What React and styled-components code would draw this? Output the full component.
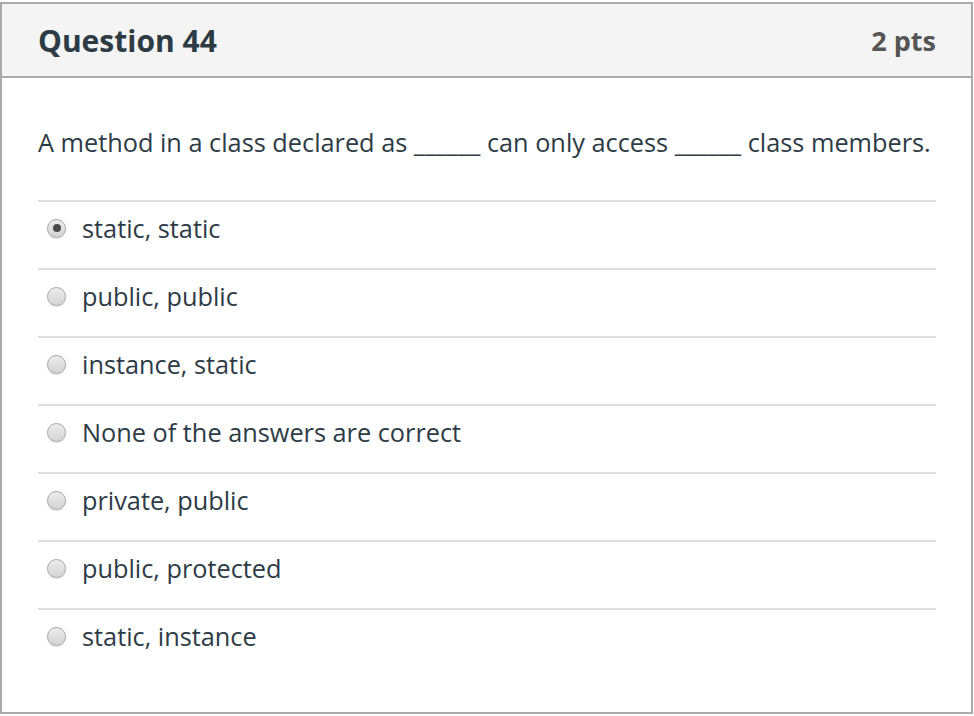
import React, { useState } from "react";
import styled, { createGlobalStyle } from "styled-components";

const GlobalStyle = createGlobalStyle`
  body {
    margin: 0;
    background: #ffffff;
    font-family: "Open Sans", "Liberation Sans", sans-serif;
    color: #2d3b45;
  }
`;

const Card = styled.div`
  box-sizing: border-box;
  width: 973px;
  height: 712px;
  margin-top: 2px;
  border: 2px solid #aaaaaa;
  display: flex;
  flex-direction: column;
`;

const Header = styled.div`
  display: flex;
  justify-content: space-between;
  align-items: center;
  height: 72px;
  padding: 0 35px 0 36px;
  background-color: #f4f4f4;
  border-bottom: 2px solid #aaaaaa;
`;

const Title = styled.h2`
  margin: 0;
  font-size: 30px;
  font-weight: 700;
  color: #2d3b45;
`;

const Points = styled.span`
  font-size: 27px;
  font-weight: 700;
  color: #555555;
`;

const Body = styled.div`
  padding: 47px 35px 0 36px;
`;

const QuestionText = styled.p`
  margin: 0 0 41px;
  font-size: 25.3px;
  line-height: 34px;
`;

const Answers = styled.div`
  display: flex;
  flex-direction: column;
`;

const AnswerRow = styled.label`
  display: flex;
  align-items: center;
  gap: 16px;
  height: 68px;
  padding: 0 0 14px 10px;
  box-sizing: border-box;
  border-top: 2px solid #dddddd;
  font-size: 25.3px;
  cursor: pointer;
`;

const Radio = styled.span`
  position: relative;
  width: 19px;
  height: 19px;
  margin-left: -1px;
  border-radius: 50%;
  box-sizing: border-box;
  border: 1px solid #a8a8a8;
  background: linear-gradient(#ececec, #d4d4d4);
  box-shadow: 0 1px 1px rgba(0, 0, 0, 0.15);
  flex-shrink: 0;

  &::after {
    content: "";
    display: ${(p) => (p.checked ? "block" : "none")};
    position: absolute;
    left: 4.5px;
    top: 4.5px;
    width: 8px;
    height: 8px;
    border-radius: 50%;
    background: #4a4a4a;
  }
`;

const answers = [
  "static, static",
  "public, public",
  "instance, static",
  "None of the answers are correct",
  "private, public",
  "public, protected",
  "static, instance",
];

export default function App() {
  const [selected, setSelected] = useState(0);
  return (
    <>
      <GlobalStyle />
      <Card>
        <Header>
          <Title>Question 44</Title>
          <Points>2 pts</Points>
        </Header>
        <Body>
          <QuestionText>
            A method in a class declared as ______ can only access ______ class
            members.
          </QuestionText>
          <Answers>
            {answers.map((a, i) => (
              <AnswerRow key={a} onClick={() => setSelected(i)}>
                <Radio checked={selected === i} />
                {a}
              </AnswerRow>
            ))}
          </Answers>
        </Body>
      </Card>
    </>
  );
}
